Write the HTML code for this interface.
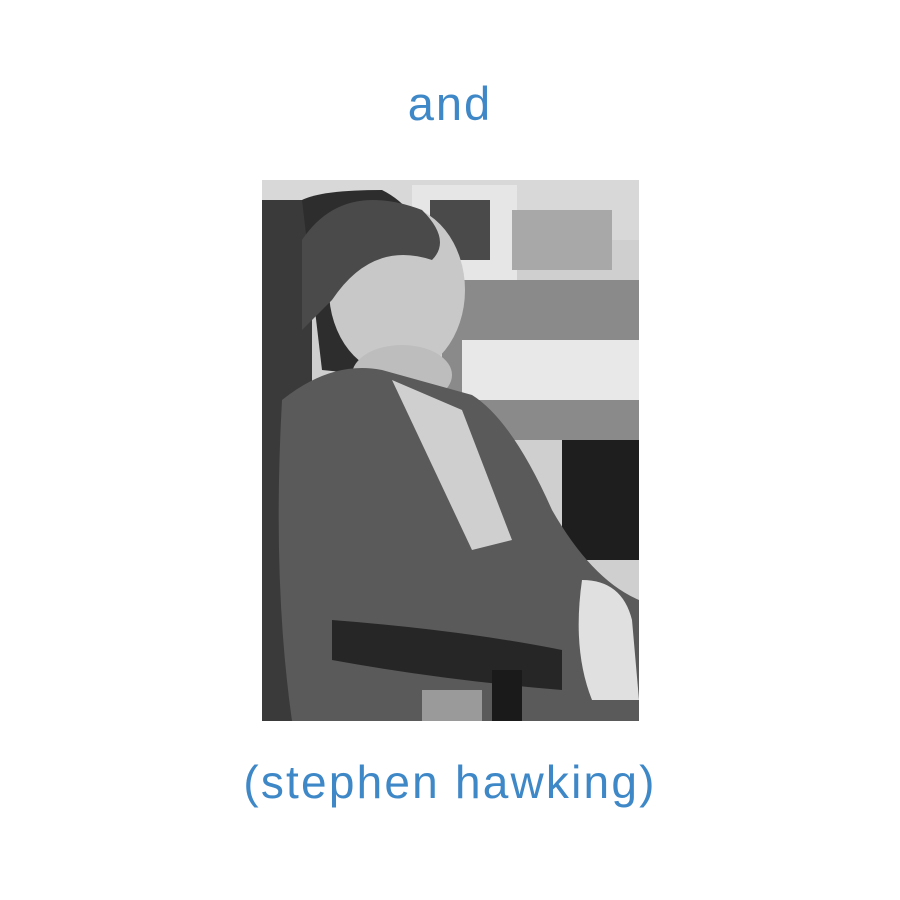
<!DOCTYPE html>
<html><head><meta charset="utf-8"><style>
html,body{margin:0;padding:0;background:#fff;width:900px;height:900px;overflow:hidden}
.t{position:absolute;left:0;width:900px;text-align:center;color:#3f88c8;font-family:"Liberation Sans",sans-serif;}
</style></head><body>
<div class="t" style="top:76px;font-size:47px;letter-spacing:2px;">and</div>
<svg style="position:absolute;left:262px;top:180px" width="377" height="541" viewBox="0 0 377 541">
<rect width="377" height="541" fill="#cfcfcf"/>
<rect x="0" y="0" width="377" height="60" fill="#d8d8d8"/>
<rect x="150" y="5" width="105" height="95" fill="#e6e6e6"/>
<rect x="168" y="20" width="60" height="60" fill="#4a4a4a"/>
<rect x="250" y="30" width="100" height="60" fill="#a8a8a8"/>
<rect x="180" y="100" width="197" height="160" fill="#8a8a8a"/>
<rect x="200" y="160" width="177" height="60" fill="#e8e8e8"/>
<rect x="300" y="260" width="77" height="120" fill="#1e1e1e"/>
<rect x="0" y="20" width="50" height="521" fill="#3a3a3a"/>
<path d="M40 20 Q60 10 120 10 Q180 40 180 150 L160 200 L60 190 Z" fill="#2d2d2d"/>
<ellipse cx="135" cy="110" rx="68" ry="85" fill="#c8c8c8"/>
<path d="M40 60 Q80 0 160 30 Q190 60 170 80 Q110 60 70 120 L40 150 Z" fill="#4a4a4a"/>
<ellipse cx="140" cy="195" rx="50" ry="30" fill="#bdbdbd"/>
<path d="M20 220 Q70 180 120 190 L210 215 Q250 240 290 330 Q330 400 377 420 L377 541 L30 541 Q10 400 20 220 Z" fill="#5a5a5a"/>
<path d="M130 200 L200 230 L250 360 L210 370 Z" fill="#cfcfcf"/>
<path d="M70 440 Q200 450 300 470 L300 510 Q180 500 70 480 Z" fill="#262626"/>
<path d="M320 400 Q360 400 370 440 L377 520 L330 520 Q310 470 320 400 Z" fill="#e0e0e0"/>
<rect x="160" y="510" width="60" height="31" fill="#9a9a9a"/>
<rect x="230" y="490" width="30" height="51" fill="#1a1a1a"/>
</svg>
<div class="t" style="top:755px;font-size:46px;letter-spacing:2.2px;">(stephen hawking)</div>
</body></html>
